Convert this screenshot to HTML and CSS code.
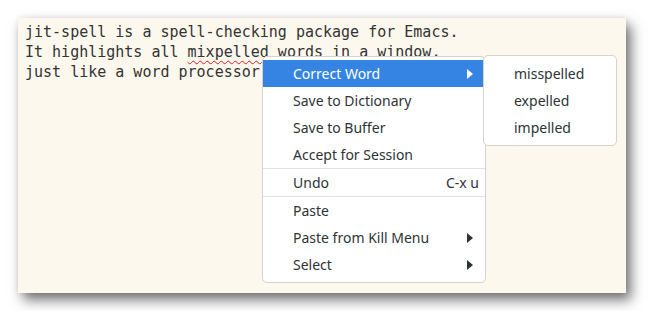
FILE: index.html
```html
<!DOCTYPE html>
<html>
<head>
  <title>jit-spell</title>
  <link rel="stylesheet" href="styles.css">
</head>
<body>
  <div class="window">
    <pre class="buffer">jit-spell is a spell-checking package for Emacs.
It highlights all <span class="typo">mixpelled</span> words in a window,
just like a word processor would.</pre>

    <div class="menu">
      <div class="item active">Correct Word<span class="arrow"></span></div>
      <div class="item">Save to Dictionary</div>
      <div class="item">Save to Buffer</div>
      <div class="item">Accept for Session</div>
      <div class="sep"></div>
      <div class="item">Undo<span class="key">C-x u</span></div>
      <div class="sep"></div>
      <div class="item">Paste</div>
      <div class="item">Paste from Kill Menu<span class="arrow"></span></div>
      <div class="item">Select<span class="arrow"></span></div>
    </div>

    <div class="menu submenu">
      <div class="item">misspelled</div>
      <div class="item">expelled</div>
      <div class="item">impelled</div>
    </div>
  </div>
</body>
</html>
```

FILE: styles.css
```css
  body {
    margin: 0;
    padding: 18px;
    background-color: #fff;
  }

  .window {
    position: relative;
    width: 608px;
    height: 275px;
    background-color: #fdf8ee;
    box-shadow: 0 0 6px rgba(0, 0, 0, 0.08), 5px 7px 12px rgba(0, 0, 0, 0.55);
  }

  .buffer {
    margin: 0;
    padding: 4px 7px;
    font-family: "DejaVu Sans Mono", monospace;
    font-size: 15px;
    line-height: 20px;
    color: #333;
  }

  .typo {
    text-decoration: underline wavy #e01b24;
    text-decoration-thickness: 1px;
    text-underline-offset: 3px;
  }

  .menu {
    position: absolute;
    left: 244px;
    top: 38px;
    width: 222px;
    padding: 3px 0 4px;
    background-color: #fff;
    border: 1px solid #d6d3cf;
    border-radius: 5px;
    font-family: "Noto Sans", sans-serif;
    font-size: 14px;
    color: #2e3436;
  }

  .submenu {
    left: 465px;
    top: 37px;
    width: 132px;
    padding: 4px 0;
  }

  .item {
    display: flex;
    align-items: center;
    justify-content: space-between;
    height: 27px;
    padding: 0 10px 0 30px;
  }

  .item.active {
    background-color: #3584e4;
    color: #fff;
  }

  .arrow {
    width: 0;
    height: 0;
    margin-right: 2px;
    border-top: 5px solid transparent;
    border-bottom: 5px solid transparent;
    border-left: 6px solid #2e3436;
  }

  .active .arrow {
    border-left-color: #fff;
  }

  .key {
    margin-right: -4px;
  }

  .sep {
    height: 1px;
    margin: 0;
    background-color: #e3e1de;
  }
```
